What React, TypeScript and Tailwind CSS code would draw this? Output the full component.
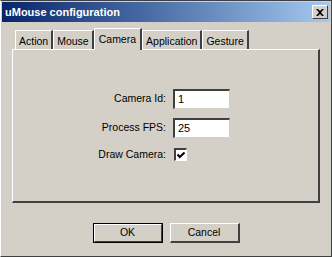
import React from "react";

const tabs = ["Action", "Mouse", "Camera", "Application", "Gesture"];

function Field({ label, value }: { label: string; value: string }) {
  return (
    <div className="flex items-center gap-[7px]">
      <span className="w-[153px] text-right">{label}</span>
      <div className="h-[20px] w-[57px] border-t-2 border-l-2 border-t-[#404040] border-l-[#404040] border-r border-b border-r-[#d4d0c8] border-b-[#d4d0c8] bg-white pl-[3px] leading-[17px] text-[11px]">
        {value}
      </div>
    </div>
  );
}

export default function App() {
  return (
    <div
      className="flex h-[257px] w-[332px] flex-col border border-[#404040] border-l-white bg-[#d4d0c8] text-[10.5px] text-black"
      style={{ fontFamily: "'Liberation Sans', Arial, sans-serif" }}
    >
      <div className="mx-[1px] mt-[1px] flex h-[20px] items-center justify-between bg-gradient-to-r from-[#0a246a] to-[#a6caf0] pl-[3px] pr-[2px]">
        <span className="text-[11px] font-bold text-white">uMouse configuration</span>
        <div className="flex h-[14px] w-[16px] items-center justify-center border border-t-white border-l-white border-r-[#404040] border-b-[#404040] bg-[#d4d0c8]">
          <svg width="8" height="7" viewBox="0 0 8 7">
            <path d="M0 0h2l2 2 2-2h2L5 3.5 8 7H6L4 5 2 7H0l3-3.5z" fill="#000" />
          </svg>
        </div>
      </div>

      <div className="mx-[11px] mt-[6px] flex h-[21px] items-end pl-[3px]">
        {tabs.map((t) =>
          t === "Camera" ? (
            <div
              key={t}
              className="relative z-10 -mb-[1px] flex h-[22px] items-start border-t border-l border-t-white border-l-white border-r-2 border-r-[#404040] bg-[#d4d0c8] px-[4px] pt-[3px]"
            >
              {t}
            </div>
          ) : (
            <div
              key={t}
              className="flex h-[19px] items-start border-t border-l border-t-white border-l-white border-r-2 border-r-[#404040] bg-[#d4d0c8] px-[3px] pt-[3px]"
            >
              {t}
            </div>
          )
        )}
      </div>

      <div className="mx-[11px] flex h-[154px] flex-col gap-[9px] border-t border-l border-t-white border-l-white border-r-2 border-b-2 border-r-[#404040] border-b-[#404040] pt-[39px]">
        <Field label="Camera Id:" value="1" />
        <Field label="Process FPS:" value="25" />
        <div className="flex items-center gap-[8px]">
          <span className="w-[153px] text-right">Draw Camera:</span>
          <div className="flex h-[13px] w-[13px] items-center justify-center border-t-2 border-l-2 border-t-[#404040] border-l-[#404040] border-r border-b border-r-white border-b-white bg-white">
            <svg width="8" height="7" viewBox="0 0 8 7">
              <path d="M0.5 2.5l2.3 2.5L7.5 0.5" stroke="#000" strokeWidth="2" fill="none" />
            </svg>
          </div>
        </div>
      </div>

      <div className="mt-[20px] flex justify-center gap-[7px]">
        <button className="h-[20px] w-[70px] border border-black">
          <div className="flex h-full w-full items-center justify-center border-t border-l border-t-white border-l-white border-r border-b border-r-[#404040] border-b-[#404040]">
            OK
          </div>
        </button>
        <button className="flex h-[20px] w-[70px] items-center justify-center border-t border-l border-t-white border-l-white border-r-2 border-b-2 border-r-[#404040] border-b-[#404040]">
          Cancel
        </button>
      </div>
    </div>
  );
}
